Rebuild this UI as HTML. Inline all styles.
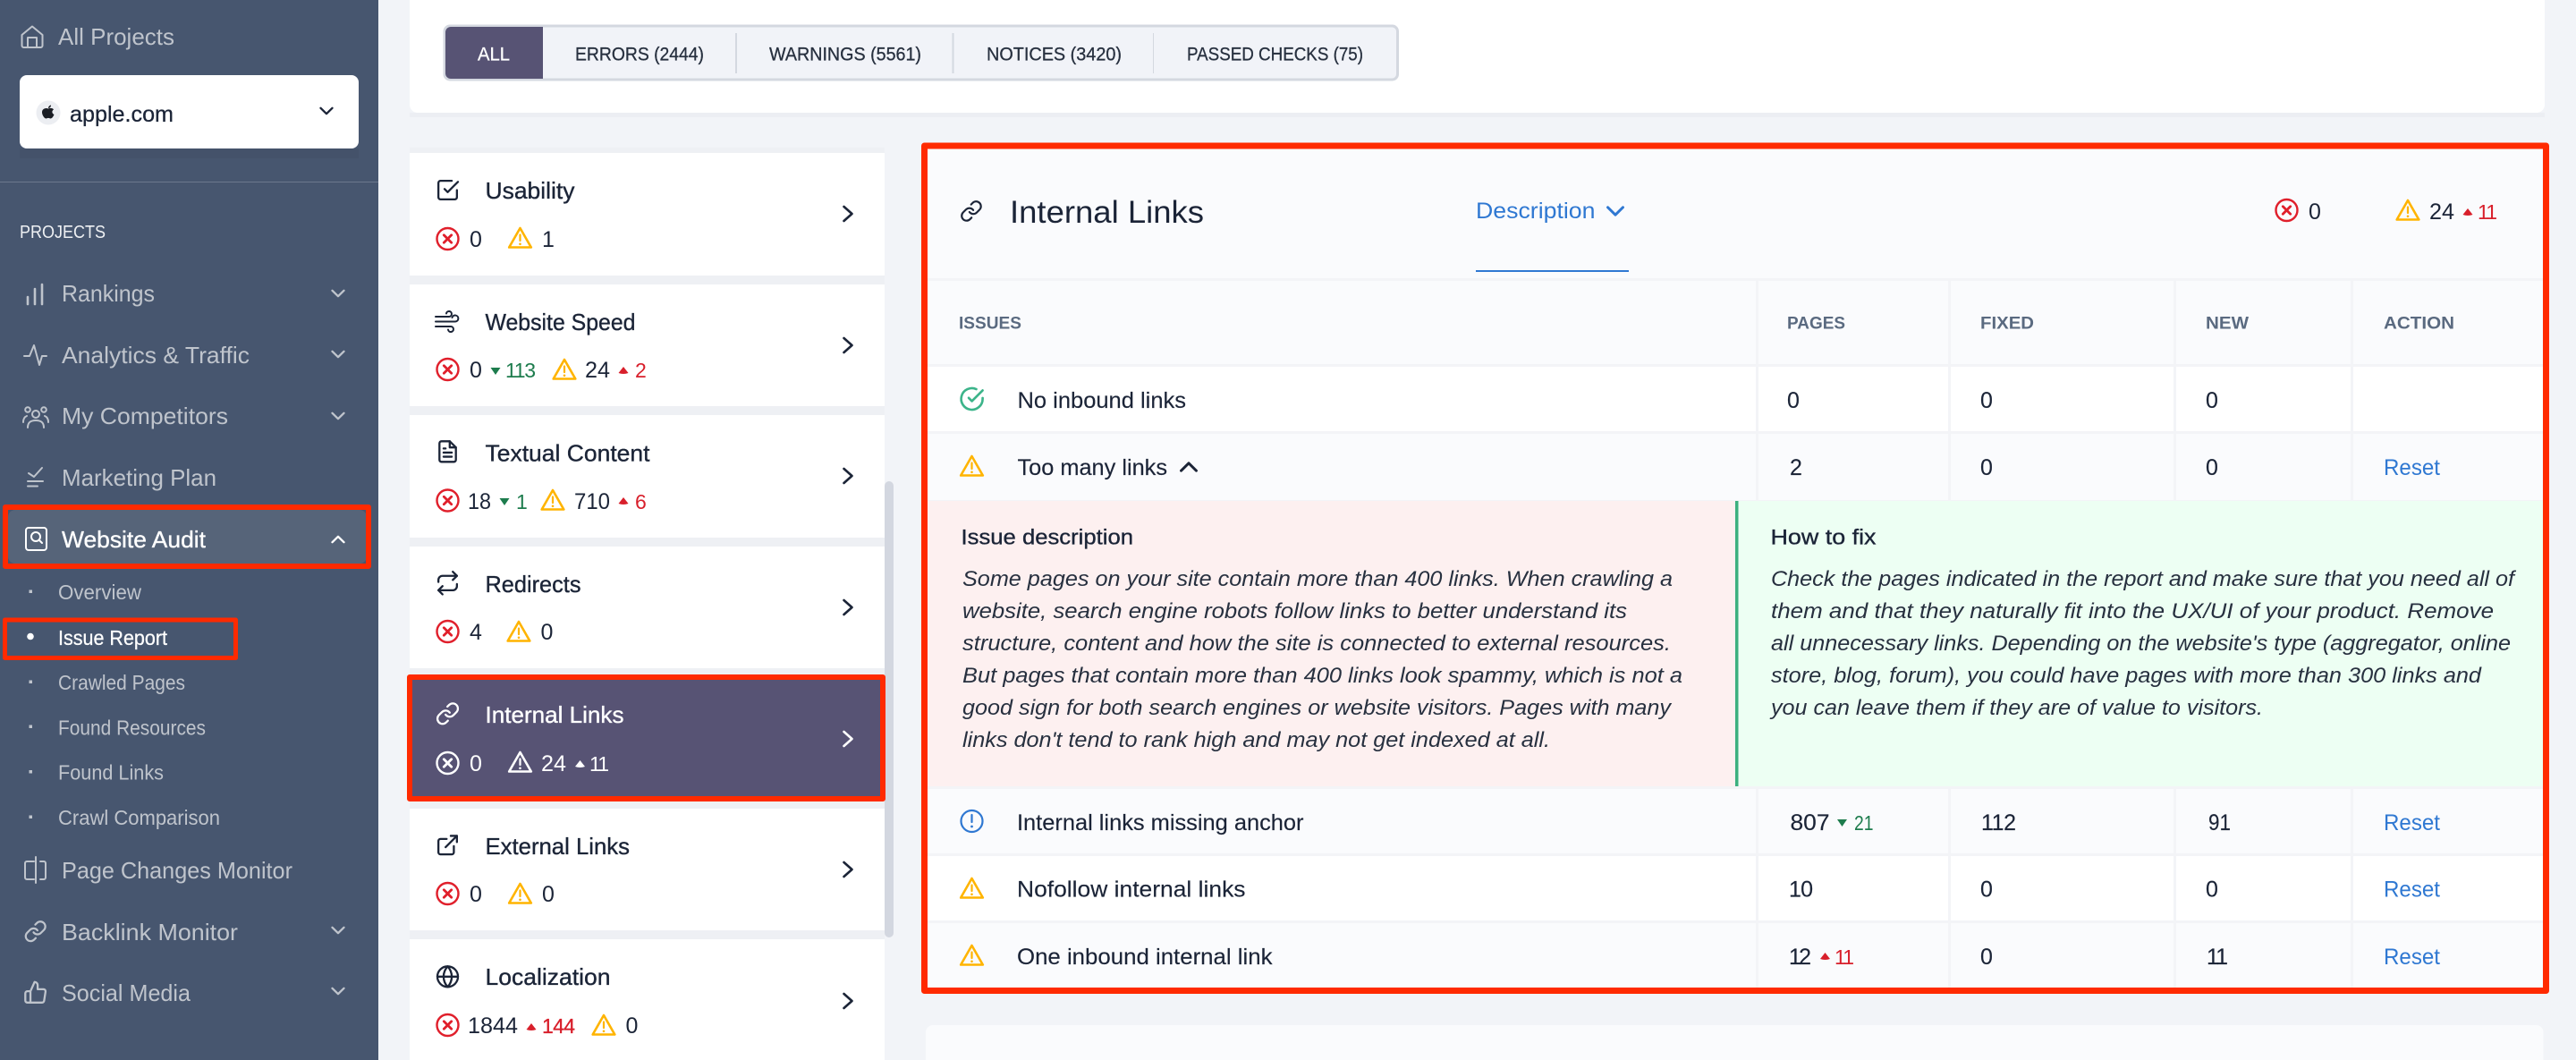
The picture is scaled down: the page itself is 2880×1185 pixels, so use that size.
<!DOCTYPE html>
<html lang="en">
<head>
<meta charset="utf-8">
<title>Issue Report</title>
<style>
html,body{margin:0;padding:0;background:#f2f4f8;width:2880px;height:1185px;overflow:hidden}
svg{display:block}
text{font-family:"Liberation Sans",sans-serif;fill:#1b2437;white-space:pre}
.m{font-size:26px;fill:#bfc4cc}
.s{font-size:23px;fill:#bfc4cc}
.t{font-size:21px;fill:#27303f;stroke:#27303f;stroke-width:.3}
.tw{font-size:21px;fill:#fff;stroke:#fff;stroke-width:.3}
.c{font-size:26px;stroke:#1b2437;stroke-width:.35}
.n{font-size:25px}
.h{font-size:19px;font-weight:bold;fill:#5a6a80}
.r{font-size:25px;stroke:#1b2437;stroke-width:.15}
.d{font-size:24px;font-style:italic;fill:#27303f}
.hd{font-size:24px;stroke:#1b2437;stroke-width:.35}
.g{fill:#1d7c4d;font-size:23px}
.e{fill:#d81f2b;font-size:23px}
.b{fill:#2f78d2;font-size:25px}
.w{fill:#fff}
.i{fill:none;stroke:currentColor;stroke-width:2;stroke-linecap:round;stroke-linejoin:round}
</style>
</head>
<body>
<svg xmlns="http://www.w3.org/2000/svg" width="2880" height="1185" viewBox="0 0 2880 1185">
<defs>
<g id="err"><circle r="12" fill="none" stroke="currentColor" stroke-width="2.4"/><path d="M-4.200-4.200L4.200 4.200M4.200-4.200L-4.200 4.200" fill="none" stroke="currentColor" stroke-width="2.800" stroke-linecap="round"/></g>
<g id="warn"><path d="M0-12L12.300 9.500H-12.300Z" fill="none" stroke="currentColor" stroke-width="2.600" stroke-linejoin="round"/><path d="M0-4.500V2" stroke="currentColor" stroke-width="2.200" stroke-linecap="round"/><circle cy="5.800" r="1.300" fill="currentColor"/></g>
<path id="cd" d="M-6.500-3.200L0 3.200L6.500-3.200" fill="none" stroke="currentColor" stroke-width="2.300" stroke-linecap="round" stroke-linejoin="round"/>
<path id="cr" d="M-4.500-8L4.500 0L-4.500 8" fill="none" stroke="currentColor" stroke-width="2.600" stroke-linecap="round" stroke-linejoin="round"/>
<path id="up" d="M-5.500 4L0-3L5.500 4Q0 6-5.500 4Z" fill="currentColor"/>
<path id="dn" d="M-5.500-4L5.500-4L0 4Z" fill="currentColor"/>
<g id="lnk" class="i"><path d="M10 13a5 5 0 0 0 7.540.540l3-3a5 5 0 0 0-7.070-7.070l-1.720 1.710"/><path d="M14 11a5 5 0 0 0-7.540-.540l-3 3a5 5 0 0 0 7.070 7.070l1.710-1.710"/></g>
</defs>

<rect width="2880" height="1185" fill="#f2f4f8"/>

<!-- SIDEBAR -->
<rect width="423" height="1185" fill="#47566f"/>
<g class="i" color="#bfc4cc"><path d="M24.500 39L36 29.500L47.500 39V51a2 2 0 0 1-2 2H26.500a2 2 0 0 1-2-2Z"/><path d="M31 53V42H41V53"/></g>
<text class="m" x="65" y="50" textLength="130" lengthAdjust="spacingAndGlyphs">All Projects</text>
<rect x="22" y="166" width="379" height="11" fill="#44526a"/>
<rect x="22" y="84" width="379" height="82" rx="8" fill="#fff"/>
<circle cx="54" cy="126" r="13.500" fill="#eceef2"/>
<path d="M54 121.500c2-1 5-.8 6 1-2.500 1.500-2 4.500.5 5.500-1 2.500-2.500 4.500-4 4.500-1 0-1.500-.6-2.500-.6s-1.500.6-2.500.6c-2 0-4.500-4-4.500-7 0-3.500 3.500-5.500 7-4zM54 121c0-2 1.500-3.200 3-3.500 0 2-1.300 3.300-3 3.500z" fill="#1a1d24"/>
<text x="78" y="136" font-size="25" textLength="116" lengthAdjust="spacingAndGlyphs" style="stroke:#1b2437;stroke-width:.3">apple.com</text>
<use href="#cd" x="365" y="124" color="#1b2437"/>
<rect y="203" width="423" height="1" fill="#6b788d"/>
<text x="22" y="266" font-size="20" class="w" textLength="96" lengthAdjust="spacingAndGlyphs" style="fill:#eef0f3">PROJECTS</text>

<path d="M31 340V332M39 340V323M47 340V318" fill="none" stroke="#bfc4cc" stroke-width="2.600" stroke-linecap="round"/>
<text class="m" x="69" y="337" textLength="104" lengthAdjust="spacingAndGlyphs">Rankings</text>
<use href="#cd" x="378" y="328" color="#bfc4cc"/>
<path class="i" color="#bfc4cc" d="M27 398H33L38 386L44 408L47 398H52"/>
<text class="m" x="69" y="406" textLength="210" lengthAdjust="spacingAndGlyphs">Analytics &amp; Traffic</text>
<use href="#cd" x="378" y="396" color="#bfc4cc"/>
<g class="i" color="#bfc4cc"><circle cx="40" cy="463" r="4"/><circle cx="31" cy="458" r="2.800"/><circle cx="49" cy="458" r="2.800"/><path d="M31 478c0-6 3.500-8 9-8s9 2 9 8"/><path d="M26 472c0-4 1.500-6 4-7M54 472c0-4-1.500-6-4-7"/></g>
<text class="m" x="69" y="474" textLength="186" lengthAdjust="spacingAndGlyphs">My Competitors</text>
<use href="#cd" x="378" y="465" color="#bfc4cc"/>
<g class="i" color="#bfc4cc"><path d="M32 529L38 533L47 523"/><path d="M31 538H48M31 543.500H42"/></g>
<text class="m" x="69" y="543" textLength="173" lengthAdjust="spacingAndGlyphs">Marketing Plan</text>

<rect x="9" y="570" width="401" height="60" rx="8" fill="#566479"/>
<g class="i" color="#fff"><rect x="29" y="590" width="23" height="25" rx="3"/><circle cx="40" cy="600" r="5"/><path d="M44 604L47 607"/></g>
<text class="m w" x="69" y="612" textLength="161" lengthAdjust="spacingAndGlyphs" style="fill:#fff;stroke:#fff;stroke-width:.35">Website Audit</text>
<g transform="translate(378,603)"><use href="#cd" transform="scale(1,-1)" color="#fff"/></g>

<rect x="32.500" y="659.500" width="3.500" height="3.500" fill="#bfc4cc"/>
<text class="s" x="65" y="670" textLength="93" lengthAdjust="spacingAndGlyphs">Overview</text>
<circle cx="34" cy="711.500" r="3.800" fill="#fff"/>
<text class="s w" x="65" y="721" textLength="122" lengthAdjust="spacingAndGlyphs" style="fill:#fff;stroke:#fff;stroke-width:.25">Issue Report</text>
<rect x="32.500" y="760.500" width="3.500" height="3.500" fill="#bfc4cc"/>
<text class="s" x="65" y="771" textLength="142" lengthAdjust="spacingAndGlyphs">Crawled Pages</text>
<rect x="32.500" y="810.500" width="3.500" height="3.500" fill="#bfc4cc"/>
<text class="s" x="65" y="821.500" textLength="165" lengthAdjust="spacingAndGlyphs">Found Resources</text>
<rect x="32.500" y="861" width="3.500" height="3.500" fill="#bfc4cc"/>
<text class="s" x="65" y="871.500" textLength="118" lengthAdjust="spacingAndGlyphs">Found Links</text>
<rect x="32.500" y="911.500" width="3.500" height="3.500" fill="#bfc4cc"/>
<text class="s" x="65" y="922" textLength="181" lengthAdjust="spacingAndGlyphs">Crawl Comparison</text>

<g class="i" color="#bfc4cc"><path d="M38 963H30a2 2 0 0 0-2 2V981a2 2 0 0 0 2 2H38"/><path d="M40 958V987"/><path d="M45 963H49a2 2 0 0 1 2 2V981a2 2 0 0 1-2 2H45"/></g>
<text class="m" x="69" y="982" textLength="258" lengthAdjust="spacingAndGlyphs">Page Changes Monitor</text>
<g transform="translate(26.500,1028) scale(1.100)" color="#bfc4cc"><use href="#lnk"/></g>
<text class="m" x="69" y="1051" textLength="197" lengthAdjust="spacingAndGlyphs">Backlink Monitor</text>
<use href="#cd" x="378" y="1040" color="#bfc4cc"/>
<g transform="translate(26,1095.500) scale(1.150)" color="#bfc4cc" class="i"><path d="M14 9V5a3 3 0 0 0-3-3l-4 9v11h11.280a2 2 0 0 0 2-1.700l1.380-9a2 2 0 0 0-2-2.300zM7 22H4a2 2 0 0 1-2-2v-7a2 2 0 0 1 2-2h3"/></g>
<text class="m" x="69" y="1119" textLength="144" lengthAdjust="spacingAndGlyphs">Social Media</text>
<use href="#cd" x="378" y="1108" color="#bfc4cc"/>

<!-- TOP CARD -->
<rect x="458" y="126" width="2387" height="5" fill="#eceef3"/>
<rect x="458" y="-10" width="2387" height="136" rx="9" fill="#fff"/>
<rect x="497" y="29" width="1065.500" height="60" rx="6" fill="#f1f3f8" stroke="#d4d8e0" stroke-width="3"/>
<path d="M607 30V88H504a6 6 0 0 1-6-6V36a6 6 0 0 1 6-6Z" fill="#575374"/>
<text class="tw" x="534" y="67.500" textLength="36" lengthAdjust="spacingAndGlyphs">ALL</text>
<text class="t" x="643" y="67.500" textLength="144" lengthAdjust="spacingAndGlyphs">ERRORS (2444)</text>
<rect x="822" y="37" width="2" height="45" fill="#d4d8e0"/>
<text class="t" x="860" y="67.500" textLength="170" lengthAdjust="spacingAndGlyphs">WARNINGS (5561)</text>
<rect x="1064.500" y="37" width="2" height="45" fill="#d4d8e0"/>
<text class="t" x="1103" y="67.500" textLength="151" lengthAdjust="spacingAndGlyphs">NOTICES (3420)</text>
<rect x="1289" y="37" width="1" height="45" fill="#d4d8e0"/>
<text class="t" x="1327" y="67.500" textLength="197" lengthAdjust="spacingAndGlyphs">PASSED CHECKS (75)</text>

<!-- LIST -->
<rect x="458" y="165" width="531" height="1020" fill="#eef0f4"/>
<rect x="989" y="538" width="10" height="510" rx="5" fill="#d3d7e0"/>
<rect x="458" y="171" width="531" height="137" fill="#fff"/>
<rect x="458" y="318" width="531" height="136" fill="#fff"/>
<rect x="458" y="464" width="531" height="137" fill="#fff"/>
<rect x="458" y="611" width="531" height="136" fill="#fff"/>
<rect x="458" y="757" width="531" height="136" fill="#575374"/>
<rect x="458" y="904" width="531" height="136" fill="#fff"/>
<rect x="458" y="1050" width="531" height="135" fill="#fff"/>

<!-- Usability -->
<g transform="translate(486.700,198.700) scale(1.150)" class="i" color="#1b2437"><path d="M9 11l3 3L22 4"/><path d="M21 12v7a2 2 0 0 1-2 2H5a2 2 0 0 1-2-2V5a2 2 0 0 1 2-2h11"/></g>
<text class="c" x="542.500" y="222" textLength="100" lengthAdjust="spacingAndGlyphs">Usability</text>
<use href="#cr" x="948" y="239" color="#1b2437"/>
<use href="#err" x="500.500" y="267" color="#e01f2b"/>
<text class="n" x="525" y="276">0</text>
<use href="#warn" x="581.500" y="267" color="#ffb400"/>
<text class="n" x="606" y="276">1</text>

<!-- Website Speed -->
<g class="i" color="#1b2437"><path d="M487 359.500H509a3.500 3.500 0 1 0-3.500-4.500"/><path d="M487 354H502a3 3 0 1 0-3-3.500"/><path d="M487 365H504a3 3 0 1 1-3 3.500"/></g>
<text class="c" x="542.500" y="369" textLength="168" lengthAdjust="spacingAndGlyphs">Website Speed</text>
<use href="#cr" x="948" y="386" color="#1b2437"/>
<use href="#err" x="500.500" y="413" color="#e01f2b"/>
<text class="n" x="525" y="422">0</text>
<use href="#dn" x="554" y="415" color="#1d7c4d"/>
<text class="g" x="565" y="422" textLength="34" lengthAdjust="spacing">113</text>
<use href="#warn" x="631" y="414" color="#ffb400"/>
<text class="n" x="654" y="422" textLength="28" lengthAdjust="spacingAndGlyphs">24</text>
<use href="#up" x="697" y="413" color="#d81f2b"/>
<text class="e" x="710" y="422">2</text>

<!-- Textual Content -->
<g transform="translate(486.700,491) scale(1.150)" class="i" color="#1b2437"><path d="M14 2H6a2 2 0 0 0-2 2v16a2 2 0 0 0 2 2h12a2 2 0 0 0 2-2V8z"/><path d="M14 2v6h6"/><path d="M16 13H8"/><path d="M16 17H8"/><path d="M10 9H8"/></g>
<text class="c" x="542.500" y="515.500" textLength="184" lengthAdjust="spacingAndGlyphs">Textual Content</text>
<use href="#cr" x="948" y="532" color="#1b2437"/>
<use href="#err" x="500.500" y="559.500" color="#e01f2b"/>
<text class="n" x="523" y="569" textLength="26" lengthAdjust="spacingAndGlyphs">18</text>
<use href="#dn" x="564" y="561" color="#1d7c4d"/>
<text class="g" x="577" y="569">1</text>
<use href="#warn" x="618" y="560" color="#ffb400"/>
<text class="n" x="642" y="569" textLength="40" lengthAdjust="spacingAndGlyphs">710</text>
<use href="#up" x="697" y="559" color="#d81f2b"/>
<text class="e" x="710" y="569">6</text>

<!-- Redirects -->
<g transform="translate(486.700,638) scale(1.150)" class="i" color="#1b2437"><path d="M17 1l4 4-4 4"/><path d="M3 11V9a4 4 0 0 1 4-4h14"/><path d="M7 23l-4-4 4-4"/><path d="M21 13v2a4 4 0 0 1-4 4H3"/></g>
<text class="c" x="542.500" y="662" textLength="107" lengthAdjust="spacingAndGlyphs">Redirects</text>
<use href="#cr" x="948" y="679" color="#1b2437"/>
<use href="#err" x="500.500" y="706" color="#e01f2b"/>
<text class="n" x="525" y="715">4</text>
<use href="#warn" x="580" y="707" color="#ffb400"/>
<text class="n" x="604.500" y="715">0</text>

<!-- Internal Links (selected) -->
<g transform="translate(486.700,784) scale(1.150)" color="#fff"><use href="#lnk"/></g>
<text class="c w" x="542.500" y="808" textLength="155" lengthAdjust="spacingAndGlyphs" style="fill:#fff;stroke:#fff">Internal Links</text>
<use href="#cr" x="948" y="826" color="#fff"/>
<use href="#err" x="500.500" y="853" color="#fff"/>
<text class="n w" x="525" y="862" style="fill:#fff">0</text>
<use href="#warn" x="581.500" y="853" color="#fff"/>
<text class="n w" x="605" y="862" textLength="28" lengthAdjust="spacingAndGlyphs" style="fill:#fff">24</text>
<use href="#up" x="648.500" y="853" color="#fff"/>
<text class="w" font-size="23" x="659" y="862" textLength="22" lengthAdjust="spacing" style="fill:#fff">11</text>

<!-- External Links -->
<g transform="translate(486.700,931) scale(1.150)" class="i" color="#1b2437"><path d="M18 13v6a2 2 0 0 1-2 2H5a2 2 0 0 1-2-2V8a2 2 0 0 1 2-2h6"/><path d="M15 3h6v6"/><path d="M10 14L21 3"/></g>
<text class="c" x="542.500" y="955" textLength="161.500" lengthAdjust="spacingAndGlyphs">External Links</text>
<use href="#cr" x="948" y="972" color="#1b2437"/>
<use href="#err" x="500.500" y="999" color="#e01f2b"/>
<text class="n" x="525" y="1008">0</text>
<use href="#warn" x="581.500" y="1000" color="#ffb400"/>
<text class="n" x="606" y="1008">0</text>

<!-- Localization -->
<g transform="translate(486.700,1078) scale(1.150)" class="i" color="#1b2437"><circle cx="12" cy="12" r="10"/><path d="M2 12h20"/><path d="M12 2a15.300 15.300 0 0 1 4 10 15.300 15.300 0 0 1-4 10 15.300 15.300 0 0 1-4-10 15.300 15.300 0 0 1 4-10z"/></g>
<text class="c" x="542.500" y="1101" textLength="140" lengthAdjust="spacingAndGlyphs">Localization</text>
<use href="#cr" x="948" y="1119" color="#1b2437"/>
<use href="#err" x="500.500" y="1146" color="#e01f2b"/>
<text class="n" x="523" y="1155" textLength="56" lengthAdjust="spacingAndGlyphs">1844</text>
<use href="#up" x="594" y="1147" color="#d81f2b"/>
<text class="e" x="606" y="1155" textLength="37" lengthAdjust="spacing" style="stroke:#d81f2b;stroke-width:.3">144</text>
<use href="#warn" x="675" y="1147" color="#ffb400"/>
<text class="n" x="699.500" y="1155">0</text>

<!-- RIGHT PANEL -->
<rect x="1037" y="166" width="1806" height="938" fill="#f3f4f7"/>
<rect x="1037" y="166" width="1806" height="145" fill="#fafbfd"/>
<rect x="1037" y="314" width="1806" height="93" fill="#fafbfd"/>
<rect x="1037" y="410" width="1806" height="72" fill="#fff"/>
<rect x="1037" y="485" width="1806" height="74" fill="#fafbfd"/>
<rect x="1037" y="882" width="1806" height="72" fill="#fafbfd"/>
<rect x="1037" y="957" width="1806" height="72" fill="#fff"/>
<rect x="1037" y="1032" width="1806" height="72" fill="#fafbfd"/>
<path d="M1964.500 314V559M2179.500 314V559M2431.500 314V559M2629.500 314V559M1964.500 882V1104M2179.500 882V1104M2431.500 882V1104M2629.500 882V1104" stroke="#f3f4f7" stroke-width="3" fill="none"/>
<rect x="1037" y="560" width="903" height="319" fill="#fdf0f0"/>
<rect x="1943.500" y="560" width="899.500" height="319" fill="#edfff3"/>
<rect x="1940" y="560" width="3.500" height="319" fill="#3cb07f"/>

<!-- header -->
<g transform="translate(1073,223) scale(1.080)" color="#1b2437"><use href="#lnk"/></g>
<text x="1129" y="249" font-size="35" textLength="217" lengthAdjust="spacingAndGlyphs">Internal Links</text>
<text class="b" x="1650" y="244" textLength="133.500" lengthAdjust="spacingAndGlyphs">Description</text>
<g transform="translate(1806,236) scale(1.300)"><use href="#cd" color="#2f78d2"/></g>
<rect x="1650" y="302" width="171" height="2" fill="#2f78d2"/>
<use href="#err" x="2556.500" y="235" color="#e01f2b"/>
<text class="n" x="2581" y="245">0</text>
<use href="#warn" x="2692" y="236" color="#ffb400"/>
<text class="n" x="2716" y="245" textLength="28" lengthAdjust="spacingAndGlyphs">24</text>
<use href="#up" x="2759" y="236" color="#d81f2b"/>
<text class="e" x="2770" y="245" textLength="22" lengthAdjust="spacing">11</text>

<!-- table head -->
<text class="h" x="1072" y="367.500" textLength="70" lengthAdjust="spacingAndGlyphs">ISSUES</text>
<text class="h" x="1998" y="367.500" textLength="65" lengthAdjust="spacingAndGlyphs">PAGES</text>
<text class="h" x="2214" y="367.500" textLength="60" lengthAdjust="spacingAndGlyphs">FIXED</text>
<text class="h" x="2466" y="367.500" textLength="48" lengthAdjust="spacingAndGlyphs">NEW</text>
<text class="h" x="2665" y="367.500" textLength="79" lengthAdjust="spacingAndGlyphs">ACTION</text>

<!-- row 1 -->
<g transform="translate(1072.200,431.600) scale(1.200)" class="i" color="#3cb48a" style="stroke-width:2.200"><path d="M22 11.080V12a10 10 0 1 1-5.930-9.140"/><path d="M22 4L12 14.010l-3-3"/></g>
<text class="r" x="1137.500" y="456" textLength="188.500" lengthAdjust="spacingAndGlyphs">No inbound links</text>
<text class="r" x="1998" y="456">0</text><text class="r" x="2214" y="456">0</text><text class="r" x="2466" y="456">0</text>

<!-- row 2 -->
<use href="#warn" x="1086.500" y="522" color="#ffb400"/>
<text class="r" x="1137.500" y="531" textLength="167.500" lengthAdjust="spacingAndGlyphs">Too many links</text>
<g transform="translate(1329,522) scale(1.300,-1.300)"><use href="#cd" color="#1b2437"/></g>
<text class="r" x="2001" y="531">2</text><text class="r" x="2214" y="531">0</text><text class="r" x="2466" y="531">0</text>
<text class="b" x="2665" y="531" textLength="63" lengthAdjust="spacingAndGlyphs">Reset</text>

<!-- expanded -->
<text class="hd" x="1074.500" y="608.500" textLength="192.500" lengthAdjust="spacingAndGlyphs">Issue description</text>
<text class="d" x="1076" y="655" textLength="794" lengthAdjust="spacingAndGlyphs">Some pages on your site contain more than 400 links. When crawling a</text>
<text class="d" x="1076" y="691" textLength="743" lengthAdjust="spacingAndGlyphs">website, search engine robots follow links to better understand its</text>
<text class="d" x="1076" y="727" textLength="792" lengthAdjust="spacingAndGlyphs">structure, content and how the site is connected to external resources.</text>
<text class="d" x="1076" y="763" textLength="805" lengthAdjust="spacingAndGlyphs">But pages that contain more than 400 links look spammy, which is not a</text>
<text class="d" x="1076" y="799" textLength="792" lengthAdjust="spacingAndGlyphs">good sign for both search engines or website visitors. Pages with many</text>
<text class="d" x="1076" y="835" textLength="657" lengthAdjust="spacingAndGlyphs">links don't tend to rank high and may not get indexed at all.</text>

<text class="hd" x="1979.500" y="608.500" textLength="118" lengthAdjust="spacingAndGlyphs">How to fix</text>
<text class="d" x="1980" y="655" textLength="831" lengthAdjust="spacingAndGlyphs">Check the pages indicated in the report and make sure that you need all of</text>
<text class="d" x="1980" y="691" textLength="808" lengthAdjust="spacingAndGlyphs">them and that they naturally fit into the UX/UI of your product. Remove</text>
<text class="d" x="1980" y="727" textLength="827" lengthAdjust="spacingAndGlyphs">all unnecessary links. Depending on the website's type (aggregator, online</text>
<text class="d" x="1980" y="763" textLength="794" lengthAdjust="spacingAndGlyphs">store, blog, forum), you could have pages with more than 300 links and</text>
<text class="d" x="1980" y="799" textLength="550" lengthAdjust="spacingAndGlyphs">you can leave them if they are of value to visitors.</text>

<!-- row 3 -->
<g color="#2f78d2"><circle cx="1086.500" cy="918" r="12" fill="none" stroke="currentColor" stroke-width="2.200"/><path d="M1086.500 911V919" stroke="currentColor" stroke-width="2.200" stroke-linecap="round"/><circle cx="1086.500" cy="924" r="1.400" fill="currentColor"/></g>
<text class="r" x="1137" y="928" textLength="320.500" lengthAdjust="spacingAndGlyphs">Internal links missing anchor</text>
<text class="r" x="2001.500" y="928" textLength="44" lengthAdjust="spacingAndGlyphs">807</text>
<use href="#dn" x="2059.500" y="920" color="#1d7c4d"/>
<text class="g" x="2073" y="928" textLength="21.500" lengthAdjust="spacingAndGlyphs">21</text>
<text class="r" x="2215" y="928" textLength="39" lengthAdjust="spacing">112</text>
<text class="r" x="2469" y="928" textLength="25" lengthAdjust="spacingAndGlyphs">91</text>
<text class="b" x="2665" y="928" textLength="63" lengthAdjust="spacingAndGlyphs">Reset</text>

<!-- row 4 -->
<use href="#warn" x="1086.500" y="994" color="#ffb400"/>
<text class="r" x="1137" y="1002.500" textLength="255.500" lengthAdjust="spacingAndGlyphs">Nofollow internal links</text>
<text class="r" x="2000" y="1002.500" textLength="27" lengthAdjust="spacing">10</text>
<text class="r" x="2214" y="1002.500">0</text><text class="r" x="2466" y="1002.500">0</text>
<text class="b" x="2665" y="1002.500" textLength="63" lengthAdjust="spacingAndGlyphs">Reset</text>

<!-- row 5 -->
<use href="#warn" x="1086.500" y="1069" color="#ffb400"/>
<text class="r" x="1137" y="1078" textLength="285.500" lengthAdjust="spacingAndGlyphs">One inbound internal link</text>
<text class="r" x="2000" y="1078" textLength="25" lengthAdjust="spacing">12</text>
<use href="#up" x="2040.500" y="1068" color="#d81f2b"/>
<text class="e" x="2051" y="1078" textLength="22" lengthAdjust="spacing">11</text>
<text class="r" x="2214" y="1078">0</text>
<text class="r" x="2467" y="1078" textLength="24" lengthAdjust="spacing">11</text>
<text class="b" x="2665" y="1078" textLength="63" lengthAdjust="spacingAndGlyphs">Reset</text>

<!-- bottom card -->
<path d="M1035 1185V1154a8 8 0 0 1 8-8H2835.500a8 8 0 0 1 8 8V1185Z" fill="#fafbfd"/>

<!-- RED ANNOTATION FRAMES -->
<g fill="none" stroke="#ff2a00" stroke-linejoin="round">
<rect x="1033.500" y="163" width="1813" height="944.500" stroke-width="7"/>
<rect x="6" y="567" width="406" height="66" stroke-width="6"/>
<rect x="5.500" y="693" width="258" height="42.500" stroke-width="5"/>
<rect x="458" y="757" width="529" height="136" stroke-width="6"/>
</g>
</svg>
</body>
</html>
